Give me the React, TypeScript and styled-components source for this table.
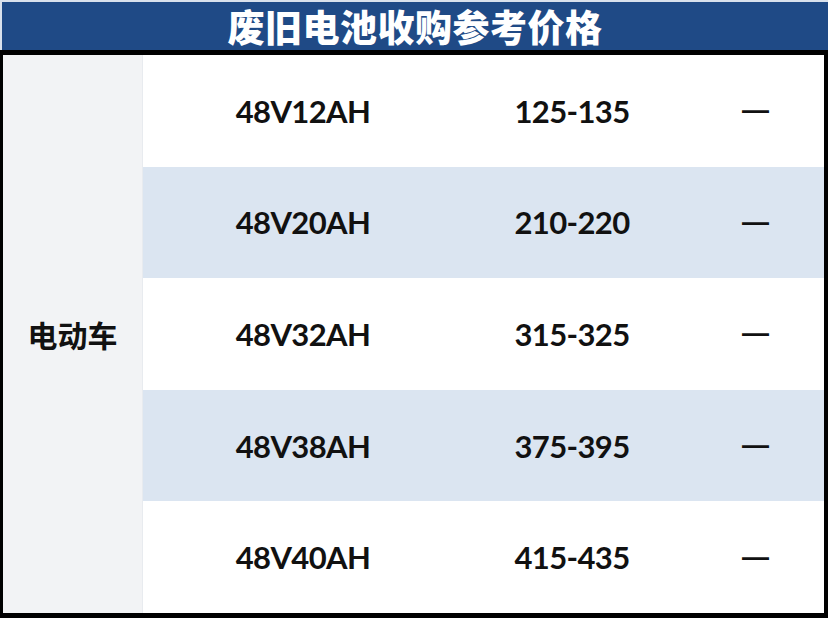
import React from "react";
import styled, { createGlobalStyle } from "styled-components";

const GlobalStyle = createGlobalStyle`
  html, body {
    margin: 0;
    padding: 0;
    background: #ffffff;
  }
  * {
    box-sizing: border-box;
  }
`;

interface PriceRow {
  spec: string;
  price: string;
  note: string;
}

const rows: PriceRow[] = [
  { spec: "48V12AH", price: "125-135", note: "—" },
  { spec: "48V20AH", price: "210-220", note: "—" },
  { spec: "48V32AH", price: "315-325", note: "—" },
  { spec: "48V38AH", price: "375-395", note: "—" },
  { spec: "48V40AH", price: "415-435", note: "—" },
];

const Frame = styled.div`
  width: 828px;
  height: 618px;
  display: flex;
  flex-direction: column;
  background: #000000;
`;

const TitleBar = styled.div`
  height: 50px;
  display: flex;
  align-items: center;
  justify-content: center;
  background: #1f4a86;
  border-top: 2px solid #d9e1ec;
  border-left: 2px solid #d9e1ec;
  color: #ffffff;
  font-family: "Noto Sans CJK SC", "Noto Sans", sans-serif;
  font-weight: 900;
  font-size: 37px;
  letter-spacing: 0.5px;
  line-height: 1;
`;

const Body = styled.div`
  flex: 1;
  margin: 5px 4px 5px 3px;
  display: flex;
  background: #ffffff;
`;

const CategoryCell = styled.div`
  width: 140px;
  display: flex;
  align-items: center;
  justify-content: center;
  background: #f2f3f5;
  border-right: 1px solid #e8ebef;
  font-family: "Noto Sans CJK SC", "Noto Sans", sans-serif;
  font-weight: 700;
  font-size: 30px;
  color: #111111;
`;

const RowList = styled.div`
  flex: 1;
  display: flex;
  flex-direction: column;
`;

const Row = styled.div<{ $shaded: boolean }>`
  flex: 1;
  display: grid;
  grid-template-columns: 320px 218px 1fr;
  align-items: center;
  background: ${(p) => (p.$shaded ? "#dbe5f1" : "#ffffff")};
  font-family: Lato, "Open Sans", sans-serif;
  font-weight: 700;
  font-size: 31px;
  color: #111111;
`;

const Cell = styled.div`
  text-align: center;
  letter-spacing: -0.6px;
`;

const Dash = styled.div`
  text-align: center;
  padding-left: 6px;
  font-family: "Liberation Sans", sans-serif;
  font-weight: 700;
  font-size: 27px;
`;

export default function App() {
  return (
    <>
      <GlobalStyle />
      <Frame>
        <TitleBar>废旧电池收购参考价格</TitleBar>
        <Body>
          <CategoryCell>电动车</CategoryCell>
          <RowList>
            {rows.map((r, i) => (
              <Row key={r.spec} $shaded={i % 2 === 1}>
                <Cell>{r.spec}</Cell>
                <Cell>{r.price}</Cell>
                <Dash>{r.note}</Dash>
              </Row>
            ))}
          </RowList>
        </Body>
      </Frame>
    </>
  );
}
